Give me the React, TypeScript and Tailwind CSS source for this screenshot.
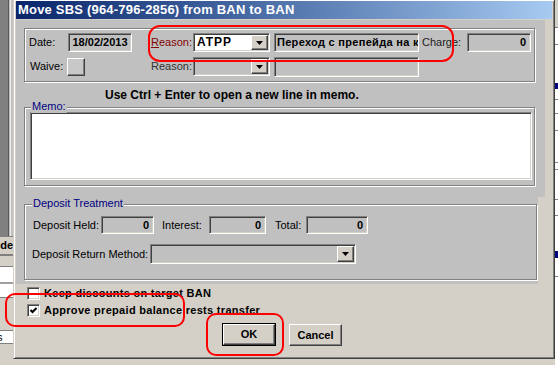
import React from "react";

const sunken =
  "border border-t-[#808080] border-l-[#808080] border-b-white border-r-white shadow-[inset_1px_1px_0_#404040,inset_-1px_-1px_0_#d4d0c8]";
const raised =
  "border border-t-white border-l-white border-b-[#404040] border-r-[#404040] shadow-[inset_-1px_-1px_0_#808080]";
const etched = "border border-[#808080] shadow-[inset_1px_1px_0_#fff,1px_1px_0_#fff]";

function Arrow() {
  return (
    <svg width="7" height="4" viewBox="0 0 7 4">
      <path d="M0 0h7L3.5 4z" fill="#000" />
    </svg>
  );
}

function Field({ className = "", children }: { className?: string; children?: React.ReactNode }) {
  return (
    <div
      className={`${sunken} flex shrink-0 items-center overflow-hidden whitespace-nowrap bg-[#c0c0c0] px-[4px] font-bold ${className}`}
    >
      {children}
    </div>
  );
}

function Combo({ className = "", value, white = false }: { className?: string; value?: string; white?: boolean }) {
  return (
    <div className={`${sunken} flex shrink-0 p-[1px] ${white ? "bg-white" : "bg-[#c0c0c0]"} ${className}`}>
      <div className="flex flex-1 items-center pl-[2px] text-[12px] font-bold tracking-[1px]">{value}</div>
      <div className={`${raised} flex w-[17px] items-center justify-center bg-[#d4d0c8]`}>
        <Arrow />
      </div>
    </div>
  );
}

function GroupBox({
  label,
  className = "",
  labelPos = "left-[6px]",
  children,
}: {
  label?: string;
  className?: string;
  labelPos?: string;
  children?: React.ReactNode;
}) {
  return (
    <div className={`relative ${etched} ${className}`}>
      {label && (
        <span className={`absolute top-[-8px] ${labelPos} bg-[#c0c0c0] px-[1px] leading-[13px] text-[#000080]`}>
          {label}
        </span>
      )}
      {children}
    </div>
  );
}

function Check({ checked = false, label }: { checked?: boolean; label: string }) {
  return (
    <div className="flex h-[13px] items-center">
      <div className={`${sunken} flex h-[13px] w-[13px] shrink-0 items-center justify-center bg-white`}>
        {checked && (
          <svg width="7" height="7" viewBox="0 0 7 7">
            <path d="M0.5 3 L2.5 5 L6.5 1" stroke="#000" strokeWidth="2" fill="none" />
          </svg>
        )}
      </div>
      <span className="ml-[4px] whitespace-nowrap font-bold tracking-[0.3px]">{label}</span>
    </div>
  );
}

function LeftStrip() {
  return (
    <div className="flex w-[13px] shrink-0 flex-col bg-[#d4d0c8]">
      <div className="flex h-[236px]">
        <div className="w-[8px] bg-[#808080]" />
        <div className="w-[1px] bg-[#5a5a5a]" />
        <div className="w-[1px] bg-[#c0c0c0]" />
        <div className="w-[1px] bg-[#eeeeee]" />
        <div className="w-[2px] bg-[#c0c0c0]" />
      </div>
      <div className="h-[1px] bg-[#808080]" />
      <div className="flex h-[17px] items-center justify-end overflow-hidden whitespace-nowrap font-bold leading-[13px]">
        Code
      </div>
      <div className="h-[2px] bg-[#808080]" />
      <div className="h-[10px]" />
      <div className="h-[16px] border-t border-[#808080] bg-white" />
      <div className="h-[2px] bg-[#a0a0a0]" />
      <div className="h-[14px] border-b border-[#808080] bg-white" />
      <div className="h-[32px]" />
      <div className="flex h-[14px] items-center overflow-hidden border-y border-[#808080] bg-white leading-[12px]">
        <span className="-ml-[3px]">s</span>
      </div>
    </div>
  );
}

function RightStrip() {
  return (
    <div className="flex w-[3px] shrink-0 flex-col bg-white">
      <div className="h-[27px] bg-[#d4d0c8]" />
      <div className="h-[1px] bg-[#808080]" />
      <div className="h-[16px]" />
      <div className="h-[1px] bg-[#808080]" />
      <div className="h-[38px]" />
      <div className="h-[6px] bg-[#000080]" />
      <div className="h-[10px]" />
      <div className="h-[1px] bg-[#808080]" />
      <div className="h-[13px]" />
      <div className="h-[1px] bg-[#808080]" />
      <div className="h-[16px]" />
      <div className="h-[1px] bg-[#808080]" />
      <div className="h-[31px]" />
      <div className="h-[1px] bg-[#808080]" />
      <div className="h-[6px]" />
      <div className="h-[1px] bg-[#808080]" />
      <div className="h-[29px]" />
      <div className="h-[1px] bg-[#808080]" />
      <div className="h-[15px]" />
      <div className="h-[1px] bg-[#808080]" />
      <div className="h-[35px]" />
      <div className="h-[7px] bg-[#000080]" />
      <div className="h-[18px]" />
      <div className="h-[1px] bg-[#808080]" />
      <div className="flex-1" />
    </div>
  );
}

export default function App() {
  return (
    <div className="relative flex h-[365px] w-[558px] overflow-hidden bg-[#d4d0c8] font-['Liberation_Sans',Arial,sans-serif] text-[11px] leading-[13px] text-black">
      <LeftStrip />

      <div className="mt-[-1px] flex h-[360px] w-[542px] shrink-0 flex-col border border-t-[#d4d0c8] border-l-[#d4d0c8] border-r-[#404040] border-b-[#404040] bg-[#d4d0c8] pb-[1px] pl-[2px] pr-[2px] pt-[1px] shadow-[inset_1px_1px_0_#fff,inset_-1px_-1px_0_#808080]">
        <div className="flex h-[18px] shrink-0 items-center bg-linear-to-r from-[#0a246a] to-[#a6caf0] pl-[2px] text-[13px] font-bold leading-[18px] tracking-[0.2px] text-white">
          Move SBS (964-796-2856) from BAN to BAN
        </div>

        <div className="mt-[1px] flex h-[177px] w-[529px] shrink-0 flex-col bg-[#c0c0c0]">
          <GroupBox className="ml-[8px] mt-[8px] h-[54px] w-[511px] shrink-0">
            <div className="mt-[4px] flex h-[19px] items-center pl-[4px]">
              <span className="w-[39px] shrink-0">Date:</span>
              <Field className="h-[19px] w-[64px] justify-center">18/02/2013</Field>
              <span className="ml-[19px] w-[42px] shrink-0 text-[#800000]">
                <span className="underline">R</span>eason:
              </span>
              <Combo className="h-[19px] w-[77px]" value="ATPP" white />
              <Field className="ml-[4px] h-[19px] w-[145px] !px-[2px] tracking-[0.3px]">
                Переход с препейда на клиента
              </Field>
              <span className="ml-[3px] w-[45px] shrink-0 text-[#202020]">Charge:</span>
              <Field className="h-[19px] w-[64px] justify-end">0</Field>
            </div>
            <div className="mt-[5px] flex h-[19px] items-center pl-[5px]">
              <span className="w-[37px] shrink-0">Waive:</span>
              <div className={`${raised} h-[18px] w-[18px] shrink-0 bg-[#c8c8c8]`} />
              <span className="ml-[66px] w-[42px] shrink-0 text-[#303030]">Reason:</span>
              <Combo className="h-[19px] w-[77px]" />
              <Field className="ml-[4px] h-[20px] w-[145px]" />
            </div>
          </GroupBox>

          <div className="mt-[7px] h-[13px] shrink-0 whitespace-nowrap pl-[89px] text-[12px] font-bold">
            Use Ctrl + Enter to open a new line in memo.
          </div>

          <GroupBox label="Memo:" className="ml-[8px] mt-[5px] h-[79px] w-[511px] shrink-0">
            <div className={`${sunken} ml-[5px] mt-[4px] h-[68px] w-[502px] bg-white`} />
          </GroupBox>
        </div>

        <div className="flex h-[87px] w-[522px] shrink-0 flex-col bg-[#c0c0c0]">
          <GroupBox
            label="Deposit Treatment"
            labelPos="left-[7px]"
            className="ml-[8px] mt-[7px] h-[76px] w-[513px] shrink-0"
          >
            <div className="mt-[11px] flex h-[18px] items-center pl-[8px]">
              <span className="w-[68px] shrink-0">Deposit Held:</span>
              <Field className="h-[18px] w-[53px] justify-end">0</Field>
              <span className="ml-[8px] w-[47px] shrink-0">Interest:</span>
              <Field className="h-[18px] w-[57px] justify-end">0</Field>
              <span className="ml-[9px] w-[31px] shrink-0">Total:</span>
              <Field className="h-[18px] w-[62px] justify-end">0</Field>
            </div>
            <div className="mt-[10px] flex h-[20px] items-center pl-[7px]">
              <span className="w-[118px] shrink-0">Deposit Return Method:</span>
              <Combo className="h-[20px] w-[206px]" />
            </div>
          </GroupBox>
        </div>

        <div className="flex flex-1 flex-col">
          <div className="mt-[3px] pl-[11px]">
            <Check label="Keep discounts on target BAN" />
          </div>
          <div className="mt-[4px] pl-[11px]">
            <Check checked label="Approve prepaid balance rests transfer" />
          </div>
          <div className="mt-[6px] flex items-start pl-[206px]">
            <div className="border border-black">
              <div className={`${raised} flex h-[21px] w-[52px] items-center justify-center bg-[#d4d0c8] font-bold`}>
                OK
              </div>
            </div>
            <div
              className={`${raised} ml-[13px] mt-[1px] flex h-[22px] w-[53px] items-center justify-center bg-[#d4d0c8] font-bold`}
            >
              Cancel
            </div>
          </div>
        </div>
      </div>

      <RightStrip />

      <div className="pointer-events-none absolute left-[148px] top-[25px] h-[37px] w-[306px] rounded-[12px] border-2 border-[#ff0000]" />
      <div className="pointer-events-none absolute left-[5px] top-[293px] h-[34px] w-[180px] rounded-[10px] border-2 border-[#ff0000]" />
      <div className="pointer-events-none absolute left-[206px] top-[313px] h-[43px] w-[78px] rounded-[10px] border-2 border-[#ff0000]" />
    </div>
  );
}
